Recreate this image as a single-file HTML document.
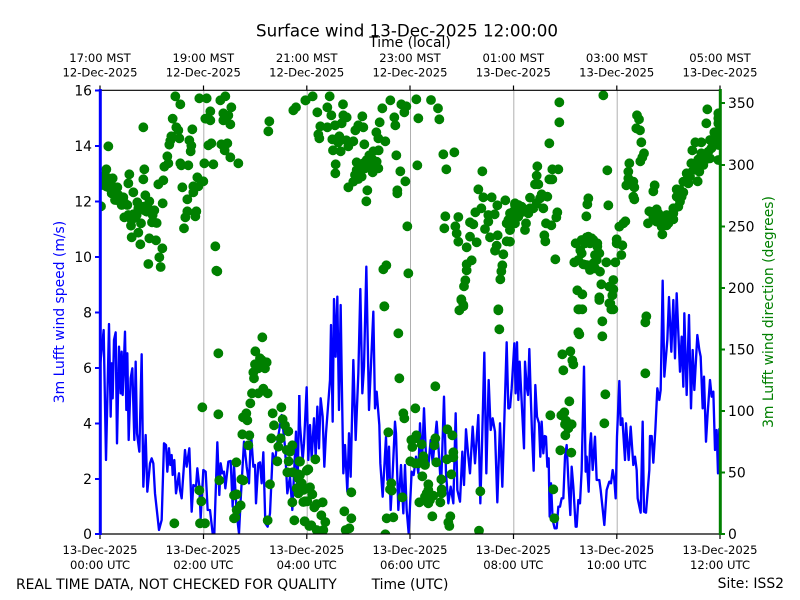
<!DOCTYPE html>
<html><head><meta charset="utf-8"><style>
html,body{margin:0;padding:0;background:#fff}
svg{display:block}
text{font-family:"DejaVu Sans",sans-serif}
.t{font-size:11.6px;text-anchor:middle;fill:#000}
.yl{font-size:13.9px;text-anchor:end;fill:#000}
.yr{font-size:13.9px;text-anchor:start;fill:#000}
.g{fill:none;stroke:#008000;stroke-width:29.5;stroke-linecap:round}
.b{fill:none;stroke:#0000ff;stroke-width:7;stroke-linejoin:round}
</style></head><body>
<svg width="800" height="600" viewBox="0 0 800 600" xmlns="http://www.w3.org/2000/svg">
<defs><clipPath id="c"><rect x="100" y="90" width="620" height="444"/></clipPath></defs>
<rect width="800" height="600" fill="#fff"/>
<g stroke="#b0b0b0" stroke-width="1"><path d="M203.8 90V534M307.2 90V534M410.5 90V534M513.8 90V534M617.2 90V534"/></g>
<g clip-path="url(#c)">
<g transform="translate(90,300) scale(.33333)"><polyline class="b" points="30,200 41,90 48,480 57,72 62,350 65,190 68,295 72,120 77,97 81,430 87,140 92,280 95,155 98,285 105,95 109,330 112,160 116,420 122,235 127,205 133,420 137,185 141,400 148,455 155,163 160,560 167,405 172,575 180,490 185,475 190,490 195,580 207,690 215,660 222,430 228,435 232,515 237,445 241,495 245,465 248,525 253,480 258,580 267,520 270,570 275,595 285,450 290,500 298,445 305,635 310,555 318,560 322,505 328,560 332,655 340,510 347,515 353,630 360,630 368,700 373,700 382,427 388,585 392,490 397,520 402,515 406,565 415,485 422,483 428,620 432,495 440,640 447,700 452,600 462,425 470,500 477,550 483,400 490,500 495,495 498,610 505,490 510,487 515,550 520,457 526,670 533,680 540,640 548,460 555,490 560,440 575,345 585,440 592,580 600,530 607,630 618,395 622,590 628,285"/></g>
<g transform="translate(300,300) scale(.33333)"><polyline class="b" points="-2,285 0,375 8,480 12,430 20,262 25,480 30,375 35,475 42,355 47,470 52,320 57,445 62,295 68,350 73,500 78,400 90,240 93,75 98,365 102,-3 107,170 112,-10 117,330 122,15 125,220 130,520 135,435 142,575 147,400 152,530 160,180 167,420 175,220 181,-33 187,280 192,200 199,-100 207,330 220,35 225,325 230,275 238,375 241,490 248,590 258,410 262,540 267,440 272,630 278,520 285,365 288,400 295,630 303,495 310,640 315,495 320,630 326,700 335,515 341,525 348,470 355,520 360,370 366,490 372,325 378,470 385,500 392,420 398,490 410,365 418,480 423,570 432,290 438,520 445,610 452,560 460,610 467,340 472,570 480,605 487,455 492,555 498,388 505,470 510,520 518,380 525,490 535,345 541,610 546,435 553,158 559,520 566,240 572,390 578,355 585,395 592,607 600,370 607,560 620,127 625,325 630,325"/></g>
<g transform="translate(510,300) scale(.33333)"><polyline class="b" points="0,325 5,265 13,130 17,280 21,127 25,300 29,185 36,325 42,445 45,185 50,260 54,285 58,147 62,280 66,400 71,512 76,255 81,350 87,370 91,470 95,365 100,460 104,408 108,410 112,500 116,475 119,650 123,550 128,660 134,685 140,685 145,620 150,620 155,595 160,595 165,470 170,435 176,560 181,645 185,500 190,560 197,680 200,680 205,600 210,610 215,510 222,200 227,515 230,470 236,575 240,435 243,400 248,510 255,410 260,540 268,540 272,570 283,675 290,570 298,545 303,550 308,510 313,540 317,595 321,410 328,243 332,375 337,355 345,480 348,370 356,480 362,380 370,495 375,470 380,510 383,595 392,638 398,365 402,635 408,638 418,510 420,408 425,408 430,488 436,390 442,265 448,300 452,270 458,-58 463,230 472,120 477,-9 484,155 490,0 495,175 500,-20 510,215 515,110 520,260 523,40 530,285 537,45 543,325 548,150 553,270 562,105 568,150 572,170 578,325 582,230 588,425 593,340 600,240 605,290 610,275 615,450 620,390 624,520 628,385"/></g>

<g transform="translate(90,80) scale(.33333)"><path class="g" d="M256 49h0M271 73h0M328 55h0M350 55h0M391 61h0M406 49h0M424 82h0M361 94h0M346 116h0M361 121h0M400 100h0M415 106h0M400 121h0M421 133h0M160 142h0M248 116h0M259 142h0M265 151h0M307 148h0M244 169h0M268 175h0M241 182h0M238 194h0M298 181h0M304 197h0M302 214h0M355 196h0M364 190h0M394 193h0M412 190h0M404 211h0M421 232h0M445 250h0M55 199h0M232 229h0M235 250h0M223 260h0M271 250h0M274 256h0M295 256h0M343 250h0M370 253h0M118 283h0M163 268h0M160 298h0M115 310h0M220 301h0M205 313h0M322 292h0M340 304h0M310 319h0M325 319h0M277 322h0M310 337h0M292 358h0M49 268h0M45 285h0M40 300h0M35 315h0M55 295h0M68 295h0M60 310h0M70 320h0M82 322h0M72 340h0M85 345h0M75 360h0M100 352h0M90 365h0M105 370h0M112 375h0M130 337h0M33 379h0M166 346h0M178 364h0M142 367h0M218 370h0M175 385h0M150 388h0M165 392h0M193 391h0M188 405h0M130 403h0M103 412h0M125 420h0M123 437h0M153 430h0M186 427h0M200 429h0M145 458h0M125 472h0M151 493h0M178 475h0M198 481h0M217 505h0M208 532h0M175 552h0M212 561h0M292 394h0M319 394h0M286 412h0M316 409h0M282 445h0M376 499h0M379 572h0M382 574h0M538 124h0M535 154h0M610 91h0M618 82h0M646 61h0M42 290h0M48 305h0M35 290h0M50 320h0M60 325h0M65 340h0M78 350h0M95 375h0M85 360h0M55 305h0M145 385h0M160 380h0M170 395h0M185 395h0M130 415h0M140 405h0M115 405h0"/></g>

<g transform="translate(300,80) scale(.33333)"><path class="g" d="M17 61h0M38 49h0M89 49h0M82 82h0M94 106h0M129 73h0M52 97h0M130 106h0M140 112h0M125 130h0M105 136h0M82 142h0M61 139h0M55 163h0M58 175h0M97 178h0M118 169h0M115 187h0M139 181h0M160 184h0M145 199h0M99 211h0M122 214h0M187 109h0M190 142h0M175 136h0M166 151h0M193 193h0M247 85h0M271 61h0M304 73h0M319 79h0M313 97h0M349 58h0M393 60h0M414 85h0M418 118h0M355 115h0M283 112h0M286 136h0M239 127h0M229 157h0M235 175h0M256 184h0M289 226h0M236 211h0M220 214h0M208 226h0M170 247h0M190 250h0M210 245h0M225 250h0M235 265h0M218 277h0M195 265h0M205 260h0M165 285h0M175 297h0M160 305h0M145 322h0M202 331h0M199 364h0M107 253h0M106 280h0M352 256h0M301 274h0M316 304h0M292 331h0M292 340h0M430 223h0M463 217h0M439 268h0M547 274h0M535 328h0M550 352h0M575 352h0M592 376h0M616 361h0M544 385h0M526 397h0M565 405h0M584 403h0M436 409h0M475 411h0M433 445h0M466 439h0M510 427h0M520 433h0M565 425h0M555 447h0M470 460h0M475 485h0M500 502h0M530 487h0M510 470h0M570 472h0M593 466h0M620 484h0M590 497h0M585 512h0M610 523h0M515 541h0M500 553h0M500 571h0M496 601h0M492 619h0M484 658h0M490 675h0M595 688h0M607 556h0M604 574h0M601 598h0M322 439h0M325 580h0M259 556h0M250 568h0M253 679h0M645 370h0M650 390h0M640 395h0M625 420h0M620 430h0M645 410h0M630 450h0M630 400h0M635 430h0M655 375h0M200 240h0M215 235h0M230 245h0M190 265h0M180 260h0M170 270h0M210 255h0M185 290h0"/></g>

<g transform="translate(510,80) scale(.33333)"><path class="g" d="M148 67h0M280 46h0M148 127h0M118 190h0M82 259h0M127 268h0M145 268h0M80 287h0M118 298h0M127 298h0M85 313h0M75 313h0M60 353h0M95 343h0M112 350h0M100 385h0M70 385h0M55 400h0M15 375h0M35 380h0M10 395h0M30 400h0M5 420h0M48 430h0M45 450h0M0 450h0M142 397h0M139 412h0M108 430h0M124 436h0M103 466h0M106 484h0M136 538h0M0 485h0M292 271h0M295 376h0M235 355h0M232 373h0M229 409h0M197 490h0M211 511h0M193 547h0M220 553h0M230 472h0M245 475h0M262 490h0M255 525h0M240 490h0M250 550h0M240 570h0M270 575h0M289 547h0M316 547h0M202 631h0M217 643h0M208 688h0M268 652h0M274 613h0M298 620h0M310 600h0M310 628h0M307 646h0M301 670h0M310 688h0M334 525h0M337 496h0M320 478h0M320 490h0M328 440h0M340 430h0M346 424h0M381 106h0M387 118h0M379 145h0M390 151h0M394 187h0M402 220h0M397 232h0M391 244h0M358 250h0M355 275h0M355 295h0M349 316h0M370 305h0M373 322h0M370 350h0M373 358h0M434 316h0M430 334h0M592 88h0M589 130h0M625 115h0M625 130h0M613 157h0M556 187h0M574 187h0M547 211h0M604 205h0M620 180h0M574 220h0M565 238h0M544 250h0M580 255h0M600 235h0M625 240h0M568 275h0M530 280h0M520 305h0M563 304h0M500 328h0M520 337h0M500 350h0M510 365h0M490 385h0M418 394h0M440 388h0M430 410h0M414 430h0M455 410h0M480 410h0M490 418h0M455 440h0M470 436h0M457 463h0M430 395h0M445 400h0M460 420h0M475 430h0M440 425h0M490 400h0M505 380h0M515 350h0M510 330h0M530 300h0M540 290h0M550 270h0M560 255h0M575 245h0M590 235h0M595 215h0M610 190h0M620 160h0M630 145h0M600 180h0M625 100h0M585 240h0M625 195h0M535 310h0M470 405h0M20 385h0M25 410h0M40 395h0M60 385h0M80 370h0M90 355h0M15 430h0M0 420h0M5 400h0M215 480h0M225 490h0M235 470h0M250 480h0M262 500h0M268 520h0M260 540h0M245 560h0M255 565h0M230 555h0M205 540h0M215 520h0"/></g>

<g transform="translate(90,300) scale(.33333)"><path class="g" d="M517 112h0M496 154h0M385 160h0M510 175h0M495 193h0M530 187h0M525 205h0M505 205h0M490 217h0M492 235h0M486 280h0M505 280h0M520 266h0M533 280h0M481 310h0M337 322h0M385 343h0M469 340h0M459 352h0M472 361h0M548 340h0M574 322h0M578 358h0M552 376h0M585 376h0M595 394h0M457 403h0M478 406h0M475 436h0M544 415h0M572 415h0M607 436h0M565 440h0M590 450h0M600 455h0M439 487h0M562 484h0M596 484h0M628 484h0M388 541h0M454 538h0M460 541h0M540 553h0M592 517h0M608 517h0M625 523h0M652 510h0M625 535h0M635 550h0M620 565h0M655 565h0M625 580h0M328 571h0M432 586h0M440 583h0M334 604h0M607 607h0M640 606h0M652 604h0M452 616h0M440 630h0M432 655h0M436 652h0M253 670h0M330 670h0M345 670h0M533 661h0M613 661h0M644 664h0M658 678h0M510 190h0M515 180h0M520 190h0M500 200h0M630 560h0M640 570h0"/></g>

<g transform="translate(300,300) scale(.33333)"><path class="g" d="M253 19h0M295 100h0M298 235h0M484 0h0M490 19h0M478 31h0M595 31h0M598 88h0M406 259h0M346 325h0M310 340h0M313 355h0M265 397h0M442 388h0M457 406h0M349 406h0M334 420h0M406 415h0M403 436h0M337 441h0M365 433h0M370 469h0M460 457h0M460 472h0M441 478h0M331 484h0M345 490h0M370 490h0M375 495h0M409 487h0M367 529h0M454 523h0M424 538h0M46 478h0M25 508h0M20 512h0M0 485h0M0 525h0M385 553h0M425 568h0M425 580h0M390 585h0M400 587h0M380 580h0M375 595h0M358 607h0M385 610h0M421 607h0M541 574h0M154 577h0M274 550h0M270 568h0M275 572h0M307 592h0M30 562h0M37 583h0M5 565h0M5 550h0M15 604h0M68 607h0M50 612h0M43 622h0M133 634h0M154 655h0M64 646h0M76 666h0M14 664h0M34 676h0M50 690h0M70 690h0M260 655h0M280 652h0M397 649h0M451 649h0M445 667h0M448 678h0M148 685h0M137 690h0M256 703h0M537 692h0M385 570h0M375 590h0M390 600h0M370 480h0M355 490h0M345 415h0"/></g>

<g transform="translate(510,300) scale(.33333)"><path class="g" d="M205 28h0M217 28h0M268 0h0M298 10h0M304 28h0M277 64h0M409 49h0M406 67h0M205 97h0M208 103h0M277 109h0M181 154h0M157 163h0M187 181h0M190 193h0M160 211h0M406 220h0M286 283h0M178 304h0M163 337h0M154 346h0M121 346h0M283 370h0M168 362h0M185 373h0M165 373h0M175 385h0M166 406h0M151 451h0M184 458h0M130 568h0M133 655h0"/></g>
</g>

<!-- spines -->
<g stroke="#000" stroke-width="1.2"><path d="M100 90.3H720M100 534H720"/>
<path d="M100 90V85.5M203.5 90V85.5M306.8 90V85.5M410 90V85.5M513.5 90V85.5M616.8 90V85.5M720 90V85.5M100 534V539M203.5 534V539M306.8 534V539M410 534V539M513.5 534V539M616.8 534V539M720 534V539"/></g>
<g stroke="#0000ff"><path stroke-width="3" d="M100.3 89V535"/><path stroke-width="2" d="M95 90.5H100M95 146H100M95 201.5H100M95 257H100M95 312.5H100M95 368H100M95 423.5H100M95 479H100M95 534H100"/></g>
<g stroke="#008000"><path stroke-width="3" d="M720.3 89V535"/><path stroke-width="2" d="M720 103H725M720 165H725M720 226.5H725M720 288H725M720 349.5H725M720 411H725M720 472.5H725M720 534H725"/></g>

<!-- titles -->
<text x="407" y="36.5" font-size="16.7" text-anchor="middle">Surface wind 13-Dec-2025 12:00:00</text>
<text x="410" y="47" font-size="13.9" text-anchor="middle">Time (local)</text>

<g class="t">
<text class="t" x="100" y="62">17:00 MST</text><text class="t" x="100" y="76.5">12-Dec-2025</text>
<text class="t" x="203.3" y="62">19:00 MST</text><text class="t" x="203.3" y="76.5">12-Dec-2025</text>
<text class="t" x="306.7" y="62">21:00 MST</text><text class="t" x="306.7" y="76.5">12-Dec-2025</text>
<text class="t" x="410" y="62">23:00 MST</text><text class="t" x="410" y="76.5">12-Dec-2025</text>
<text class="t" x="513.3" y="62">01:00 MST</text><text class="t" x="513.3" y="76.5">13-Dec-2025</text>
<text class="t" x="616.7" y="62">03:00 MST</text><text class="t" x="616.7" y="76.5">13-Dec-2025</text>
<text class="t" x="720" y="62">05:00 MST</text><text class="t" x="720" y="76.5">13-Dec-2025</text>

<text class="t" x="100" y="554">13-Dec-2025</text><text class="t" x="100" y="569">00:00 UTC</text>
<text class="t" x="203.3" y="554">13-Dec-2025</text><text class="t" x="203.3" y="569">02:00 UTC</text>
<text class="t" x="306.7" y="554">13-Dec-2025</text><text class="t" x="306.7" y="569">04:00 UTC</text>
<text class="t" x="410" y="554">13-Dec-2025</text><text class="t" x="410" y="569">06:00 UTC</text>
<text class="t" x="513.3" y="554">13-Dec-2025</text><text class="t" x="513.3" y="569">08:00 UTC</text>
<text class="t" x="616.7" y="554">13-Dec-2025</text><text class="t" x="616.7" y="569">10:00 UTC</text>
<text class="t" x="720" y="554">13-Dec-2025</text><text class="t" x="720" y="569">12:00 UTC</text>
</g>

<text class="yl" x="92" y="95.5">16</text><text class="yl" x="92" y="151">14</text><text class="yl" x="92" y="206.5">12</text><text class="yl" x="92" y="262">10</text><text class="yl" x="92" y="317.5">8</text><text class="yl" x="92" y="373">6</text><text class="yl" x="92" y="428.5">4</text><text class="yl" x="92" y="484">2</text><text class="yl" x="92" y="539">0</text>

<text class="yr" x="728" y="108">350</text><text class="yr" x="728" y="170">300</text><text class="yr" x="728" y="231.5">250</text><text class="yr" x="728" y="293">200</text><text class="yr" x="728" y="354.5">150</text><text class="yr" x="728" y="416">100</text><text class="yr" x="728" y="477.5">50</text><text class="yr" x="728" y="539">0</text>

<text transform="translate(64,312) rotate(-90)" font-size="13.9" fill="#0000ff" text-anchor="middle">3m Lufft wind speed (m/s)</text>
<text transform="translate(773,312) rotate(-90)" font-size="13.9" fill="#008000" text-anchor="middle">3m Lufft wind direction (degrees)</text>

<text x="16" y="589" font-size="13.9">REAL TIME DATA, NOT CHECKED FOR QUALITY</text>
<text x="410" y="589" font-size="13.9" text-anchor="middle">Time (UTC)</text>
<text x="784" y="588" font-size="13.9" text-anchor="end">Site: ISS2</text>
</svg>
</body></html>
